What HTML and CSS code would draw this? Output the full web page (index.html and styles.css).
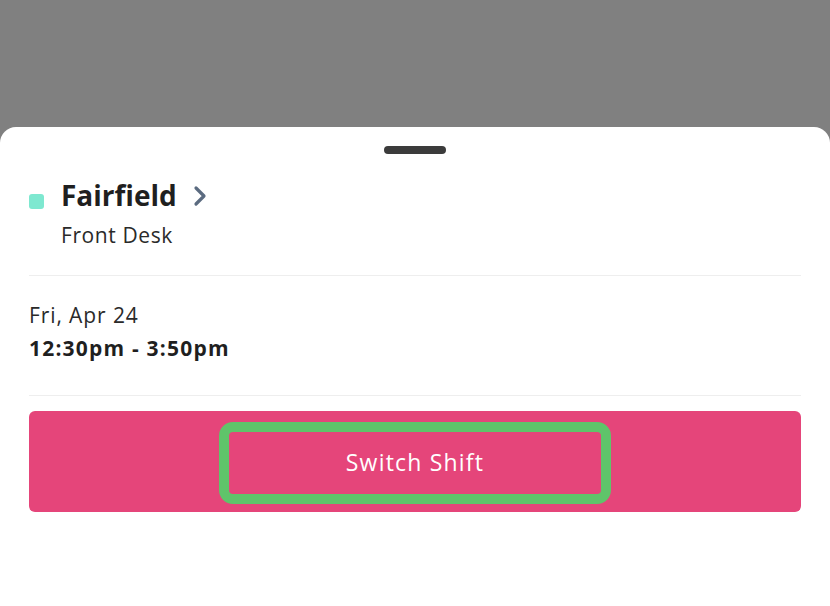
FILE: index.html
```html
<!DOCTYPE html>
<html lang="en">
<head>
<meta charset="utf-8">
<title>Shift</title>
<link rel="stylesheet" href="styles.css">
</head>
<body>
<div class="backdrop"></div>
<div class="sheet">
  <div class="handle"></div>
  <div class="header">
    <span class="dot"></span>
    <div class="titles">
      <div class="title-row">
        <span class="title">Fairfield</span>
        <svg class="chev" width="14" height="22" viewBox="0 0 14 22"><polyline points="3,3 11,11 3,19" fill="none" stroke="#5b6b80" stroke-width="3.2" stroke-linecap="round" stroke-linejoin="round"/></svg>
      </div>
      <div class="subtitle">Front Desk</div>
    </div>
  </div>
  <div class="divider"></div>
  <div class="when">
    <div class="date">Fri, Apr 24</div>
    <div class="time">12:30pm - 3:50pm</div>
  </div>
  <div class="divider"></div>
  <button class="action">Switch Shift<span class="highlight"></span></button>
</div>
</body>
</html>
```
FILE: styles.css
```css
html, body {
  margin: 0;
  padding: 0;
  height: 100%;
}
body {
  background: #808080;
  font-family: "Open Sans", "Noto Sans", sans-serif;
  color: #222222;
  overflow: hidden;
}
.backdrop {
  height: 127px;
}
.sheet {
  background: #ffffff;
  border-radius: 16px 16px 0 0;
  height: 479px;
  padding: 19px 29px 0;
  box-sizing: border-box;
}
.handle {
  width: 62px;
  height: 8px;
  border-radius: 4px;
  background: #3b3b3b;
  margin: 0 auto;
}
.header {
  display: flex;
  align-items: flex-start;
  margin-top: 22px;
  height: 99px;
}
.dot {
  width: 15px;
  height: 15px;
  border-radius: 3px;
  background: #7ee8d0;
  margin-top: 18px;
  flex: none;
}
.titles {
  margin-left: 17px;
}
.title-row {
  display: flex;
  align-items: center;
  height: 38px;
}
.title {
  font-size: 28px;
  font-weight: 700;
  color: #1f1f1f;
  line-height: 38px;
}
.chev {
  margin-left: 16px;
  margin-top: 2px;
}
.subtitle {
  font-size: 21px;
  letter-spacing: 0.6px;
  line-height: 26px;
  margin-top: 8px;
  color: #2a2a2a;
}
.divider {
  height: 1px;
  background: #eeeeee;
}
.when {
  height: 119px;
  padding-top: 26px;
  box-sizing: border-box;
}
.date {
  font-size: 21px;
  letter-spacing: 0.9px;
  line-height: 26px;
  color: #2a2a2a;
}
.time {
  font-size: 21px;
  letter-spacing: 1.2px;
  line-height: 28px;
  font-weight: 700;
  margin-top: 6px;
  color: #1f1f1f;
}
.action {
  position: relative;
  display: block;
  width: 100%;
  height: 101px;
  margin-top: 15px;
  border: none;
  border-radius: 6px;
  background: #e5457a;
  color: #ffffff;
  font-family: "Open Sans", "Noto Sans", sans-serif;
  font-size: 23px;
  letter-spacing: 1.2px;
  padding: 0;
}
.highlight {
  position: absolute;
  left: 190px;
  top: 11px;
  width: 392px;
  height: 82px;
  border: 10px solid #5fc46a;
  border-radius: 14px;
  box-sizing: border-box;
}
```
